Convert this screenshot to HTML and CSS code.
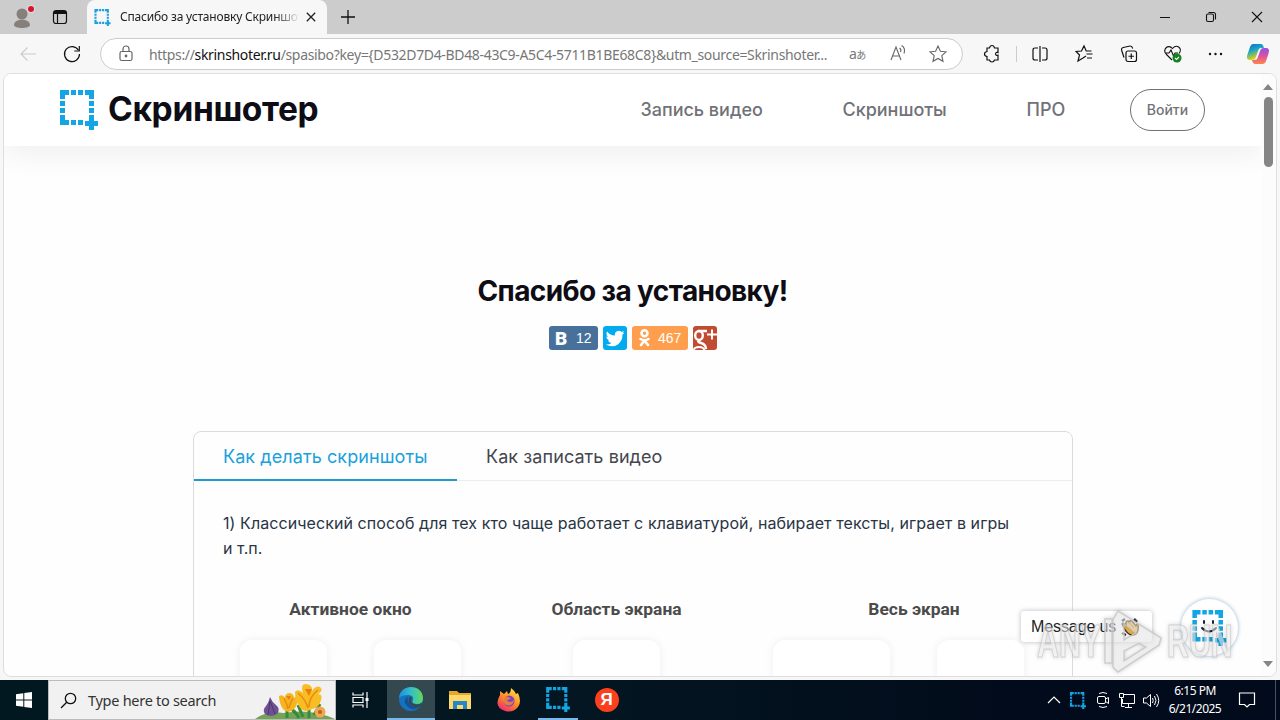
FILE: index.html
```html
<!DOCTYPE html>
<html lang="ru"><head><meta charset="utf-8"><title>Спасибо за установку</title><link rel="stylesheet" href="styles.css"></head>
<body>
<svg class="defs" width="0" height="0"><defs>
<symbol id="marquee" viewBox="0 0 38 40"><path fill="currentColor" d="M0 0h9v5H5v4H0zM11 0h5v5h-5zM18 0h5v5h-5zM25 0h9v9h-5V5h-4zM0 11h5v5H0zM0 18h5v5H0zM29 11h5v5h-5zM29 18h5v5h-5zM0 25h5v5h4v5H0zM11 30h5v5h-5zM18 30h5v5h-5zM29 25h5v6h4v5h-4v4h-5v-4h-4v-5h4z"/></symbol>
</defs></svg>
<div class="screen">
<div class="tabs">
 <svg class="avatar" width="28" height="28"><circle cx="14" cy="11" r="5.500" fill="#85807c"/><path d="M6 22c0-7 16-7 16 0 0 4-16 4-16 0z" fill="#85807c"/><circle cx="23" cy="6" r="4" fill="#ddd"/><circle cx="23" cy="6" r="3" fill="#d8152a"/></svg>
 <svg class="spaces" width="16" height="16" fill="none" stroke="#111" stroke-width="1.200"><rect x="1.500" y="1.500" width="13" height="13" rx="2.500"/><path d="M2 3.500h12" stroke-width="3"/><path d="M5.500 5v9"/></svg>
 <div class="tab"><svg class="fav" width="17" height="17"><use href="#marquee"/></svg><span class="tabtitle">Спасибо за установку Скриншот</span><svg width="10" height="10" stroke="#222" stroke-width="1.300"><path d="M.8.8l8.400 8.400M9.200.8L.8 9.200"/></svg></div>
 <svg class="plus" width="14" height="14" stroke="#111" stroke-width="1.300"><path d="M7 0v14M0 7h14"/></svg>
 <div class="wins"><svg width="46" height="20" fill="none" stroke="#111"><path d="M18 10.500h10"/></svg><svg width="46" height="20" fill="none" stroke="#111" stroke-width="1.100"><rect x="18.500" y="7" width="7" height="7.500" rx="1.500"/><path d="M20.500 5.500h5q2 0 2 2v5"/></svg><svg width="46" height="20" stroke="#111" stroke-width="1.100"><path d="M18 5l10 10M28 5L18 15"/></svg></div>
</div>
<div class="toolbar">
 <svg width="20" height="20" fill="none" stroke="#ccc" stroke-width="1.200"><path d="M18 10H3M9.500 3.500L3 10l6.500 6.500"/></svg>
 <svg class="refresh" width="20" height="20" fill="none" stroke="#111" stroke-width="1.200"><path d="M16.500 6.300A7.500 7.500 0 1 0 17.500 10"/><path d="M17.300 2v5h-5"/></svg>
 <div class="address">
  <svg class="lock" width="18" height="20" fill="none" stroke="#666" stroke-width="1.200"><rect x="3" y="7.500" width="12" height="9" rx="1.800"/><path d="M6 7V5a3 3 0 0 1 6 0v2"/><circle cx="9" cy="12" r=".8" fill="#555"/></svg>
  <span class="url">https://<b>skrinshoter.ru</b>/spasibo?key={D532D7D4-BD48-43C9-A5C4-5711B1BE68C8}&amp;utm_source=Skrinshoter...</span>
  <span class="translate">a<i>あ</i></span>
  <svg class="read" width="20" height="20" fill="none" stroke="#666" stroke-width="1.100"><path d="M3 16L8 3l5 13M4.700 12h6.600M11.500 4c1.500 1 1.500 3 1 4M13.500 1.500c3.500 2 3.500 5 2.500 8"/></svg>
  <svg class="star" width="20" height="20" fill="none" stroke="#666" stroke-width="1.100"><path d="M10 2l2.400 5.200 5.600.6-4.200 3.800 1.200 5.700-5-2.900-5 2.900 1.200-5.700L2 7.800l5.600-.6z"/></svg>
 </div>
 <svg class="ext" width="20" height="20" fill="none" stroke="#111" stroke-width="1.200"><path d="M5 4h2.500q.5-2.500 2.500-2.500T12.500 4H16v4.500q-2-.8-2.500 1.300.5 2.200 2.500 1.400V16h-3.500q-.5 2-2.500 2t-2.500-2H5v-3.500Q2.500 12 2.500 10T5 7.500z"/></svg>
 <i class="divider"></i>
 <svg class="split" width="20" height="20" fill="none" stroke="#111" stroke-width="1.200"><path d="M8 4H5Q3 4 3 6v8q0 2 2 2h3M12 4h3q2 0 2 2v8q0 2-2 2h-3M10 2v16"/></svg>
 <svg class="favs" width="20" height="20" fill="none" stroke="#111" stroke-width="1.200"><path d="M11 12l-3 2-5 3 1.500-6L1 7.500l5.500-.5L9 2l2.200 5h5.300M11.500 10h6M12 14h5"/></svg>
 <svg class="collections" width="20" height="20" fill="none" stroke="#111" stroke-width="1.200"><rect x="7" y="7" width="10.500" height="10.500" rx="2"/><path d="M12.250 9.500v5.500M9.500 12.250H15M5 13.500L2.700 6.500Q2 4 4.300 3.500L11 2q2-.2 2.700 2.500"/></svg>
 <svg class="health" width="20" height="20" fill="none" stroke="#111" stroke-width="1.100"><path d="M9 16L3.500 10.500C-1 5.500 5-.5 9.500 4.500c4.500-5 10.500 0 6.500 5M3 9h3l2-3 2.500 6L12 9h3"/><circle cx="14" cy="14" r="4.500" fill="#13831d" stroke="none"/><path d="M12 14l1.500 1.500L16 13" stroke="white"/></svg>
 <svg class="dots" width="20" height="20"><g fill="#111"><circle cx="5" cy="10" r="1.200"/><circle cx="10.500" cy="10" r="1.200"/><circle cx="16" cy="10" r="1.200"/></g></svg>
 <svg class="copilot" width="24" height="24"><defs><linearGradient id="ca" x2=".4" y2="1"><stop stop-color="#1265d3"/><stop offset=".45" stop-color="#19a5c9"/><stop offset=".8" stop-color="#a6c83c"/><stop offset="1" stop-color="#ffd22a"/></linearGradient><linearGradient id="cb" x2="0" y2="1"><stop stop-color="#8958e6"/><stop offset=".5" stop-color="#df4fa0"/><stop offset="1" stop-color="#ff8747"/></linearGradient></defs><path d="M7 2h8q2 0 3 4h-3q-2 0-2.600 2L10 15q-1 3-3.500 3H4q-4 0-2.700-5L4 5q1-3 3-3z" fill="url(#ca)"/><path d="M17 22H9q-2 0-3-4h3q2 0 2.600-2L14 9q1-3 3.500-3H20q4 0 2.700 5L20 19q-1 3-3 3z" fill="url(#cb)"/></svg>
</div>
<main class="page">
 <header>
  <svg class="logo" width="38" height="40"><use href="#marquee"/></svg><span class="brand">Скриншотер</span>
  <nav><span class="n1">Запись видео</span><span class="n2">Скриншоты</span><span class="n3">ПРО</span></nav><span class="login">Войти</span>
 </header>
 <h1><span>Спасибо за установку!</span></h1>
 <div class="social">
  <span class="vk"><b>B</b><em>12</em></span>
  <span class="tw"><svg width="24" height="24"><path fill="#fff" d="M21.500 6.500q-1 .5-2.100.6 1.200-.7 1.600-2-1.200.7-2.400.9a4 4 0 0 0-6.700 3.600Q7.200 9.400 4.100 5.500q-1.700 3 .9 5.300-.9 0-1.600-.5 0 3 3 4-.7.200-1.600 0 1 2.600 3.700 2.700-2.200 1.800-5.800 1.600 6.700 3.600 12.200-.2 4.700-3.500 4.600-9.900 1.200-.8 2-2z"/></svg></span>
  <span class="ok"><svg width="24" height="24" fill="none" stroke="#fff" stroke-width="2.600" stroke-linecap="round"><circle cx="12.500" cy="7.300" r="3"/><path d="M8.500 13q4 2.500 8 0M12.500 14.500L9 19M12.500 14.500L16 19"/></svg><em>467</em></span>
  <span class="gp"><svg width="24" height="24" fill="none" stroke="#fff"><ellipse cx="6" cy="9.500" rx="3.800" ry="4.500" stroke-width="2.400"/><path d="M5 5h9M7 14q-4 1.500 1 3 5 1.500 5 6" stroke-width="2.400"/><path d="M14 8.500h10M19 3.500v10" stroke-width="2"/><ellipse cx="6" cy="25" rx="5.500" ry="4" stroke-width="2.200"/></svg></span>
 </div>
 <section class="card">
  <div class="cardtabs"><span class="t1"><span>Как делать скриншоты</span></span><span class="t2">Как записать видео</span></div>
  <p><span class="l1">1) Классический способ для тех кто чаще работает с клавиатурой, набирает тексты, играет в игры</span><br><span>и т.п.</span></p>
  <div class="modes">
   <div class="m1"><h2>Активное окно</h2><div><i></i><i></i></div></div>
   <div class="m2"><h2>Область экрана</h2><div><i></i></div></div>
   <div class="m3"><h2>Весь экран</h2><div><i class="wide"></i><i></i></div></div>
  </div>
 </section>
 <div class="scroll"><svg width="10" height="6"><path d="M5 0l5 6H0z" fill="#858585"/></svg><i></i><svg class="down" width="10" height="6"><path d="M0 0h10L5 6z" fill="#858585"/></svg></div>
 <div class="message"><span>Message us</span><svg width="18" height="20"><path d="M1 4l3-2M1 8l2-2M1 16l4 2M13 2l3 3" stroke="#343b46" stroke-width="2.500"/><path d="M2 9q0-2 2-2l1 1V5q2-2 3 0 1-2 3-1l4 5 1-2q2 0 1 6-1 6-7 5Q5 16 2 9z" fill="#edb64c" stroke="#4b3511" stroke-width="1.400"/><path d="M5 8l5 5M8 5l5 6" stroke="#a76f20"/></svg></div>
 <div class="chat"><svg class="chaticon" width="35" height="36"><use href="#marquee"/></svg><svg class="smile" width="20" height="18" fill="none" stroke="#16243a" stroke-width="2" stroke-linecap="round"><path d="M5 2v2M14 2v2M3 9q7 7 14 0"/></svg></div>
 <div class="watermark"><span>ANY</span><svg width="58" height="66" fill="#fff" fill-opacity=".5" stroke="#c8c8c8" stroke-opacity=".85" stroke-width="1.500"><path d="M1 11h7v44H1z"/><path fill-rule="evenodd" d="M14 3l43 27-2 7-41 27-5-5V12zM20 16v16l12-7zM20 43v10l22-14-7-4z"/></svg><span>RUN</span></div>
</main>
<div class="taskbar">
 <div class="start"><svg width="16" height="16" fill="#fff"><path d="M0 2.300L7.300 1.300v6.300H0zM8.300 1.100L16 0v7.600H8.300zM0 8.600h7.300v6.200L0 13.800zM8.300 8.600H16V16l-7.700-1.100z"/></svg></div>
 <div class="search"><svg class="mag" width="17" height="17" fill="none" stroke="#111" stroke-width="1.300"><circle cx="10.500" cy="6.500" r="5.200"/><path d="M6.700 10.300L1 16"/></svg><span>Type here to search</span>
 <svg class="flowers" width="80" height="38"><path d="M0 38q12-9 28-6 28-5 52 6z" fill="#73a455"/><path d="M32 37V26M54 37V24M44 37q-4-8-9-9M48 36l-5-12M59 34l6-11" stroke="#388b3b" stroke-width="3"/><path d="M15 16q2 5 6 8 5 4 1 9-6 4-12 0-3-4 1-8 3-4 4-9z" fill="#705095"/><path d="M15 20l-2 14M15 20l5 13" stroke="#48356c"/><path d="M24 15q4-2 6 2 0-5 5-5 4 1 4 5 5-4 4 1-1 8-5 11-6 4-10-1-4-6-4-13z" fill="#f6b51e"/><path d="M40 11q3-4 8 1-3-9 3-9 7 1 6 7 5-7 9-3 2 3-3 6 5 0 3 6-2 8-9 9-9 5-13-3-4-7-4-14z" fill="#f8bd22"/><path d="M43 12q8 7 10 15M63 9q-9 7-9 17M29 17q3 6 4 11M38 17q-3 5-4 10" stroke="#e98b12" fill="none" stroke-width="1.500"/><path d="M50 8h7l-3 7zM31 15h5l-2 4z" fill="#ef7c13"/><circle cx="65" cy="31" r="5.500" fill="#f4a64f"/><circle cx="65" cy="31" r="2" fill="#b96024"/></svg></div>
 <div class="cell tv"><svg width="20" height="20" fill="none" stroke="#fff" stroke-width="1.200"><path d="M2 2.500v2.500h10V2.500M2 17.500v-2.500h10v2.500M2 7.500h10v5H2zM16 2v16"/><path d="M14.500 8h3v3h-3z" fill="#fff" stroke="none"/></svg></div>
 <div class="cell active"><svg width="24" height="24"><defs><linearGradient id="ed" x2="1"><stop stop-color="#1f8fdb"/><stop offset=".5" stop-color="#35bec9"/><stop offset="1" stop-color="#63d95b"/></linearGradient></defs><circle cx="12" cy="12" r="12" fill="#1273be"/><path d="M0 11C1-3 23-4 24 11q0 6-6 6-6 0-4-4 1-5-5-5-6 0-9 3z" fill="url(#ed)"/><path d="M9 9q-7 6 0 11 6 5 13-1-3 1-7 0-8-2-6-10z" fill="#174f9d"/><path d="M12 10q-3 5 2 8 5 2 9-1" fill="none" stroke="#364848" stroke-width="2.500"/></svg></div>
 <div class="cell"><svg width="22" height="20"><path d="M0 1h8l2 2h12v16H0z" fill="#e9a72a"/><path d="M0 5h22v14H0z" fill="#ffd86c"/><path d="M4 11h14v8h-4v-4H8v4H4z" fill="#2487c8"/></svg></div>
 <div class="cell"><svg width="24" height="24"><defs><linearGradient id="ff" x1=".8" x2=".2" y2="1"><stop stop-color="#ffe447"/><stop offset=".5" stop-color="#ff8b24"/><stop offset="1" stop-color="#ec2573"/></linearGradient></defs><path d="M3 7V3l4 3 3-3 1 3q3-1 3-6 4 3 5 6l2-1q4 9 0 14-5 6-13 4Q-4 19 3 7z" fill="url(#ff)"/><circle cx="12" cy="13" r="5.500" fill="#7843c2"/><path d="M6 9q5-2 8 2l-4 1q3 4 7 0-1 7-8 5-4-3-3-8z" fill="#ff8b24" opacity=".8"/></svg></div>
 <div class="cell run"><svg class="blue" width="24" height="25"><use href="#marquee"/></svg></div>
 <div class="cell"><span class="yandex">Я</span></div>
 <div class="tray">
  <svg width="14" height="20" fill="none" stroke="#fff" stroke-width="1.200"><path d="M1 13l6-6 6 6"/></svg>
  <svg class="traymark" width="16" height="17"><use href="#marquee"/></svg>
  <svg class="cam" width="16" height="20" fill="none" stroke="#fff"><rect x="2.500" y="6.500" width="8" height="7" rx="1.500"/><path d="M10.500 9l3-1.500v6L10.500 11.500M4 3.500q4-2 8 0M4 16.500q4 2 8 0"/></svg>
  <svg class="net" width="18" height="20" fill="none" stroke="#fff"><path d="M5 4.500h11.500v9H4.500V9M10.500 14v3M7 17.500h7M1.500 3.500h4v4h-4zM3.500 7.500v9h3"/></svg>
  <svg class="vol" width="18" height="20" fill="none" stroke="#fff"><path d="M1.500 8h3l4-3.500v12l-4-3.500h-3zM10.500 8q1.500 2.500 0 5M12.500 6q3 4.500 0 9M14.500 4q4.500 6.500 0 13"/></svg>
  <div class="clock"><span>6:15 PM</span><span>6/21/2025</span></div>
  <svg class="notice" width="18" height="18" fill="none" stroke="#fff" stroke-width="1.200"><path d="M1.500 2h15v11.500h-5L9 16l-2.500-2.500h-5z"/></svg><i class="edge"></i>
 </div>
</div>
</div></body></html>
```
FILE: styles.css
```css
*{box-sizing:border-box}
body{margin:0;overflow:hidden;font-family:Inter,"Liberation Sans",sans-serif}
svg{display:block;flex:none}
span{white-space:nowrap}
.defs{position:absolute}
.screen{width:1280px;height:720px;background:#f7f7f7;display:flex;flex-direction:column}
.tabs{height:34px;background:#ccc;display:flex;align-items:center;flex:none}
.avatar{margin-left:8px;margin-top:-1px}
.spaces{margin-left:16px}
.tab{width:240px;height:34px;margin-left:19px;background:#f7f7f7;border-radius:8px 8px 0 0;display:flex;align-items:center;padding-left:7px}
.fav{color:#1a9fe0}
.tabtitle{font:12px "Noto Sans",sans-serif;letter-spacing:-.18px;width:180px;margin:-1px 6px 0 9px;color:#222;-webkit-mask-image:linear-gradient(90deg,#000 86%,transparent)}
.plus{margin-left:14px}
.wins{display:flex;margin-left:auto}
.toolbar{height:40px;flex:none;display:flex;align-items:center;padding-left:18px}
.refresh{margin-left:24px}
.address{width:863px;height:32px;margin-left:18px;border:1px solid #ccc;border-radius:16px;background:#fff;display:flex;align-items:center;padding-left:16px}
.url{font:14px "Noto Sans",sans-serif;color:#777;width:680px;margin-left:14px;letter-spacing:-.335px}
.url b{font-weight:400;color:#111}
.translate{font:14px "Noto Sans",sans-serif;color:#777;margin-left:20px;width:20px;letter-spacing:-.5px;line-height:20px}
.translate i{font:normal 10px "Noto Sans CJK JP",sans-serif;line-height:1}
.read{margin-left:19px}
.star{margin-left:20px}
.ext{margin-left:19px}
.divider{width:1px;height:16px;background:#ccc;margin-left:14px}
.split{margin-left:13px}
.favs{margin-left:25px}
.collections{margin-left:24px}
.health{margin-left:24px}
.dots{margin-left:22px}
.copilot{margin-left:21px}
.page{position:relative;width:1274px;height:604px;margin:-1px 0 0 3px;border:1px solid #dedede;border-radius:8px;background:#fefefe;overflow:hidden;flex:none}
header{height:72px;display:flex;align-items:center;padding:0 0 0 56px;background:#fff;box-shadow:0 10px 28px rgba(0,0,0,.055);width:1259px}
.logo,.chaticon,.blue,.traymark{color:#14a5e5}
.brand{font-size:33.5px;line-height:40px;font-weight:700;color:#0e0d15;width:211px;margin:-2px 0 0 10px;letter-spacing:-.35px}
nav{display:flex;font-size:18px;font-weight:500;color:#717277;margin:-2px 0 0 321.5px;letter-spacing:-.02px}
.n1{width:202px}.n2{width:184px}.n3{width:103.5px}
.login{width:75px;height:42px;border:1px solid #707178;border-radius:21px;display:flex;align-items:center;justify-content:center;font-size:14px;font-weight:500;color:#717277;padding-bottom:2px}
h1{font-size:28px;line-height:36px;margin:127px 0 0;width:1257px;text-align:center;color:#0e0d15;font-weight:700;letter-spacing:-.62px}
.social{display:flex;gap:5px;margin:17px 0 0 545px;font:14px "Liberation Sans",sans-serif;color:#fff}
.social>span{height:24px;border-radius:3px;display:flex;align-items:center;overflow:hidden}
.social em{font-style:normal}
.vk{width:49px;background:#47719b;padding-left:6px}
.vk b{font:900 19px Roboto,sans-serif;width:21px}
.tw{width:24px;background:#00aced}
.ok{width:56px;background:#ff9f4d}
.ok em{margin-left:2px}
.gp{width:24px;background:#c14b31}
.card{width:880px;height:300px;margin:81px 0 0 189px;border:1px solid #dcdcdf;border-radius:8px}
.cardtabs{height:49px;border-bottom:1px solid #eee;display:flex;font-size:18px;line-height:22px;color:#44464d;letter-spacing:.08px}
.t1{width:263px;border-bottom:2px solid #2099cd;height:49px;color:#19a1dc;padding:14px 0 0 29px}
.t2{padding:14px 0 0 29px}
p{margin:30px 0 0 29px;font-size:16px;line-height:25px;color:#293445;letter-spacing:.08px}
.modes{display:flex;font-size:16px;margin-top:38px}
.modes h2{font:700 17.4px/20px Roboto,sans-serif;color:#4b4b4b;margin:0 0 21px;text-align:center;white-space:nowrap}
.modes>div>div{display:flex;gap:47px}
.modes i{width:87px;height:80px;border-radius:12px;background:#fff;box-shadow:0 0 10px rgba(0,0,0,.065)}
.m1{width:221px;margin-left:46px}
.m2{width:87px;margin-left:112px}.m2 h2{margin-left:-22px;width:131px}
.m3{width:251px;margin-left:113px}.m3 h2{width:282px}
.modes .wide{width:117px}
.scroll{position:absolute;right:0;top:0;width:15px;height:602px;background:#fcfcfc;display:flex;flex-direction:column;align-items:center;padding:10px 1px 9px 0}
.scroll i{width:9px;height:70px;margin-top:7px;background:#858585;border-radius:5px}
.scroll .down{margin-top:auto}
.message{position:absolute;left:1017px;top:537px;width:131px;height:31px;background:#fff;border-radius:3px;box-shadow:0 0 5px #bbb;display:flex;align-items:center;padding-left:10px;gap:5px;font:16px "Liberation Sans",sans-serif;letter-spacing:-.1px;color:#222}
.chat{position:absolute;left:1177px;top:525px;width:57px;height:57px;border-radius:50%;background:#fff;box-shadow:0 0 4px #9bb6cc;padding:11px}
.smile{position:absolute;left:18px;top:20px}
.watermark{position:absolute;left:1033px;top:534px;display:flex;align-items:center;font:700 46px/66px "Liberation Sans",sans-serif;color:rgba(255,255,255,.5);-webkit-text-stroke:1.2px rgba(195,195,195,.7);filter:drop-shadow(0 0 2px rgba(0,0,0,.25))}
.watermark span{width:71px;display:block;transform:scaleX(.66);transform-origin:left}
.watermark svg{margin-left:-4px;margin-right:5px}
.taskbar{height:40px;margin-top:3px;flex:none;background:linear-gradient(90deg,#021820,#031621 45%,#020b1b 80%,#020b1b);display:flex}
.start{width:48px;display:grid;place-items:center}
.search{width:288px;background:#f1f1f1;border:1px solid #bbb;display:flex;align-items:center;color:#333}
.search span{font:14.5px "Noto Sans",sans-serif;letter-spacing:-.28px;margin-left:11px;width:130px}
.mag{margin-left:11px}.flowers{margin-left:auto}
.cell{width:49px;height:40px;display:grid;place-items:center;flex:none}
.tv{width:51px;padding-right:2px}.active{width:48px;background:#34494f;border-bottom:2px solid #78b9ec}.run{border-bottom:2px solid #78b9ec;width:40px;margin:0 4px 0 5px}
.yandex{width:24px;height:24px;border-radius:50%;background:#fc3f1d;color:#fff;font:700 17px/24px "Liberation Sans",sans-serif;text-align:center}
.tray{display:flex;align-items:center;margin-left:auto;color:#fff}
.traymark{margin-left:9px}.cam{margin-left:9px}.net{margin-left:7px}.vol{margin-left:6px}
.clock{width:60px;margin-left:5px;display:flex;flex-direction:column;align-items:center;font:12px/18px "Noto Sans",sans-serif;letter-spacing:-.5px}
.notice{margin-left:13px}.edge{width:1px;height:40px;background:#465263;margin:0 4px 0 19px}
```
